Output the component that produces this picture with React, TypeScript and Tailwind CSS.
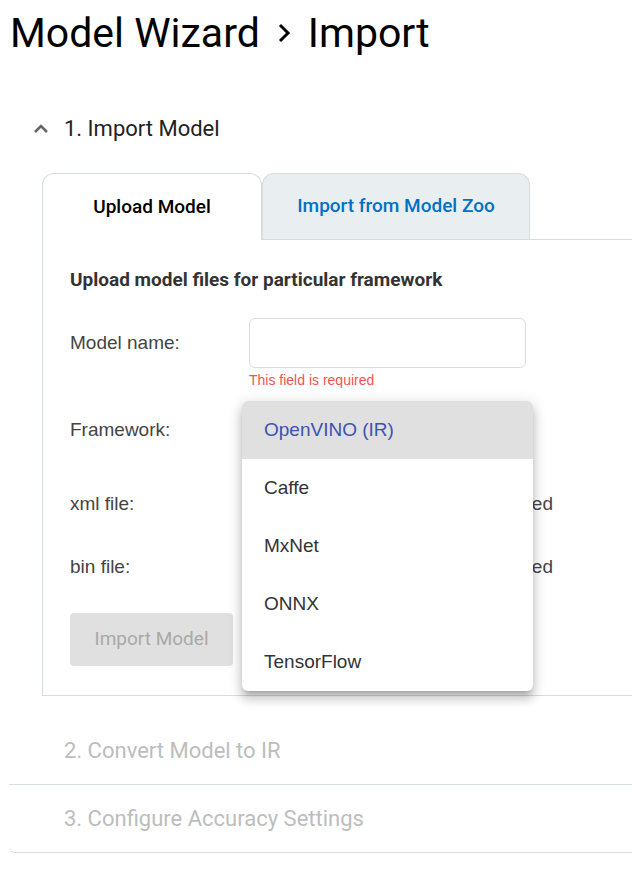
import { FC } from "react";

const ChevronUp: FC = () => (
  <svg width="16" height="12" viewBox="0 0 16 12" className="shrink-0">
    <polyline
      points="2,10 8,4 14,10"
      fill="none"
      stroke="#666666"
      strokeWidth="2.6"
    />
  </svg>
);

const Separator: FC = () => (
  <svg width="14" height="20" viewBox="0 0 14 20" className="shrink-0">
    <polyline
      points="3,2 11,10 3,18"
      fill="none"
      stroke="#000000"
      strokeWidth="3"
    />
  </svg>
);

const frameworks = ["OpenVINO (IR)", "Caffe", "MxNet", "ONNX", "TensorFlow"];

const App: FC = () => {
  return (
    <div className="relative h-[869px] w-[632px] overflow-hidden bg-white font-['Roboto',sans-serif]">
      <h1 className="flex items-center pl-[10px] pt-[7px] text-[41px] font-normal leading-[52px] text-black">
        <span>Model Wizard</span>
        <span className="mx-[17px]">
          <Separator />
        </span>
        <span>Import</span>
      </h1>

      <div className="ml-[9px] mt-[41px] w-[720px] rounded-bl-[6px] border-b border-[#d6dcdf]">
        {/* step 1 */}
        <section className="pb-[21px]">
          <div className="flex h-[56px] items-center gap-[15px] pl-[24px]">
            <ChevronUp />
            <span className="text-[22px] text-[#222222]">1. Import Model</span>
          </div>

          <div className="ml-[33px] mt-[17px]">
            <div className="relative z-10 flex">
              <div className="-mb-px flex h-[67px] w-[220px] items-center justify-center rounded-t-[12px] border border-b-0 border-[#d6dcdf] bg-white text-[19px] font-medium text-black">
                Upload Model
              </div>
              <div className="flex h-[66px] w-[268px] items-center justify-center rounded-t-[12px] border border-b-0 border-[#d6dcdf] bg-[#e9eef1] text-[19px] font-medium text-[#0071c5]">
                Import from Model Zoo
              </div>
            </div>

            <div className="border-b border-l border-t border-[#d6dcdf] pb-[29px] pl-[27px] pt-[28px] font-['Liberation_Sans',Arial,sans-serif] text-[19px] text-[#444444]">
              <p className="font-['Roboto',sans-serif] text-[19px] font-bold leading-[24px] text-[#333333]">
                Upload model files for particular framework
              </p>

              <div className="mt-[26px] flex items-center">
                <span className="w-[179px]">Model name:</span>
                <input
                  className="h-[50px] w-[277px] rounded-[6px] border border-[#dddddd] bg-white px-3 outline-none"
                  type="text"
                />
              </div>
              <p className="ml-[179px] mt-[4px] text-[14px] leading-[16px] text-[#ef5350]">
                This field is required
              </p>

              <div className="mt-[17px] flex h-[50px] items-center">
                <span className="w-[179px]">Framework:</span>
                <div className="h-[50px] w-[277px] rounded-[6px] border border-[#dddddd]" />
              </div>

              <div className="mt-[24px] flex h-[50px] items-center">
                <span className="w-[179px]">xml file:</span>
                <span className="w-[304px] text-right">File is not selected</span>
              </div>

              <div className="mt-[13px] flex h-[50px] items-center">
                <span className="w-[179px]">bin file:</span>
                <span className="w-[304px] text-right">File is not selected</span>
              </div>

              <button
                className="mt-[21px] flex h-[53px] w-[163px] items-center justify-center rounded-[4px] bg-[#e0e0e0] font-['Roboto',sans-serif] text-[19px] text-[#a9a9a9]"
                disabled
              >
                Import Model
              </button>
            </div>
          </div>
        </section>

        {/* step 2 */}
        <section className="flex h-[68px] items-center border-b border-[#d6dcdf] pl-[55px] text-[22px] text-[#bdbdbd]">
          2. Convert Model to IR
        </section>

        {/* step 3 */}
        <section className="flex h-[67px] items-center pl-[55px] text-[22px] text-[#bdbdbd]">
          3. Configure Accuracy Settings
        </section>
      </div>

      {/* open framework menu */}
      <ul className="absolute left-[242px] top-[401px] z-20 w-[291px] overflow-hidden rounded-[6px] bg-white py-0 font-['Liberation_Sans',Arial,sans-serif] text-[19px] text-[#333333] shadow-[0_5px_5px_-3px_rgba(0,0,0,0.2),0_8px_10px_1px_rgba(0,0,0,0.14),0_3px_14px_2px_rgba(0,0,0,0.12)]">
        {frameworks.map((name, i) => (
          <li
            key={name}
            className={
              i === 0
                ? "flex h-[58px] items-center bg-[#e0e0e0] pl-[22px] text-[#3f51b5]"
                : "flex h-[58px] items-center pl-[22px]"
            }
          >
            {name}
          </li>
        ))}
      </ul>
    </div>
  );
};

export default App;
